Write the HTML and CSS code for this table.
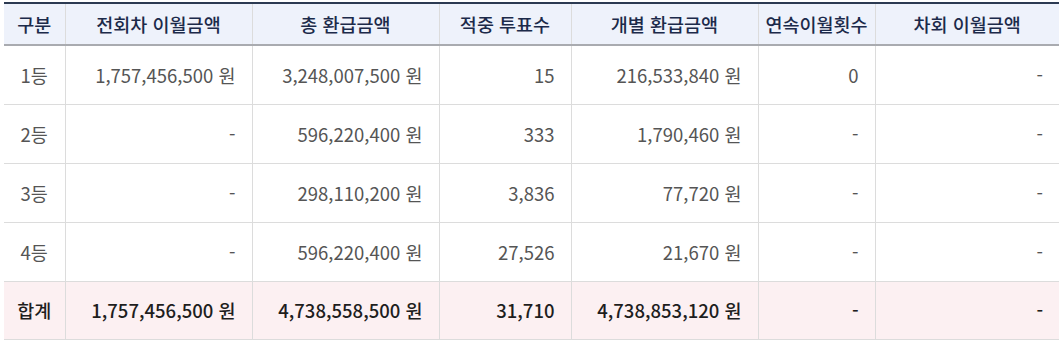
FILE: index.html
```html
<!DOCTYPE html>
<html lang="ko">
<head>
<meta charset="utf-8">
<link rel="stylesheet" href="styles.css">
</head>
<body>
<div class="wrap">
<table class="prize">
  <colgroup>
    <col class="c1"><col class="c2"><col class="c3"><col class="c4"><col class="c5"><col class="c6"><col class="c7">
  </colgroup>
  <thead>
    <tr>
      <th>구분</th><th>전회차 이월금액</th><th>총 환급금액</th><th>적중 투표수</th><th>개별 환급금액</th><th>연속이월횟수</th><th>차회 이월금액</th>
    </tr>
  </thead>
  <tbody>
    <tr>
      <td class="rank">1등</td><td>1,757,456,500 원</td><td>3,248,007,500 원</td><td>15</td><td>216,533,840 원</td><td>0</td><td>-</td>
    </tr>
    <tr>
      <td class="rank">2등</td><td>-</td><td>596,220,400 원</td><td>333</td><td>1,790,460 원</td><td>-</td><td>-</td>
    </tr>
    <tr>
      <td class="rank">3등</td><td>-</td><td>298,110,200 원</td><td>3,836</td><td>77,720 원</td><td>-</td><td>-</td>
    </tr>
    <tr>
      <td class="rank">4등</td><td>-</td><td>596,220,400 원</td><td>27,526</td><td>21,670 원</td><td>-</td><td>-</td>
    </tr>
    <tr class="total">
      <td class="rank">합계</td><td>1,757,456,500 원</td><td>4,738,558,500 원</td><td>31,710</td><td>4,738,853,120 원</td><td>-</td><td>-</td>
    </tr>
  </tbody>
</table>
</div>
</body>
</html>
```

FILE: styles.css
```css
html, body {
  margin: 0;
  padding: 0;
  background: #fff;
}
.wrap {
  padding: 2px 3px 0 4px;
}
.prize {
  width: 1055px;
  border-collapse: collapse;
  table-layout: fixed;
  font-family: "Noto Sans CJK KR", "Noto Sans", sans-serif;
  font-size: 18.5px;
  border-top: 2px solid #2c3a52;
}
.c1 { width: 61px; }
.c2 { width: 187px; }
.c3 { width: 187px; }
.c4 { width: 132px; }
.c5 { width: 187px; }
.c6 { width: 117px; }
.c7 { width: 184px; }
.prize th {
  height: 40px;
  padding: 0;
  background: #eef2fb;
  color: #1c2a4a;
  font-weight: 500;
  text-align: center;
  border-left: 1px solid #dcdcdc;
  border-bottom: 2px solid #a9abb0;
  line-height: 1.2;
}
.prize th:first-child, .prize td:first-child { border-left: none; }
.prize td {
  height: 58px;
  padding: 0 16px 0 8px;
  color: #555;
  text-align: right;
  border-left: 1px solid #dcdcdc;
  border-bottom: 1px solid #dcdcdc;
  white-space: nowrap;
  line-height: 1.2;
}
.prize td.rank {
  text-align: center;
  padding: 0;
}
.prize tr.total td {
  height: 57px;
  background: #fcf0f2;
  color: #1e1e1e;
  font-weight: 500;
  border-bottom: 2px solid #dcdcdc;
}
```
